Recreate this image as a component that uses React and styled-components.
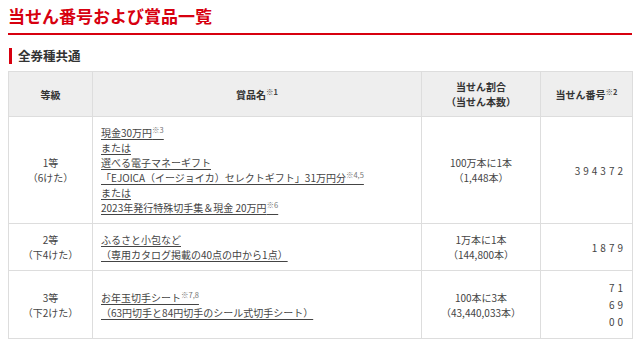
import React from 'react';
import styled, { createGlobalStyle } from 'styled-components';

const GlobalStyle = createGlobalStyle`
  body {
    margin: 0;
    padding: 0 8px;
    background: #fff;
    color: #333;
    font-family: "Noto Sans CJK JP", "Noto Sans", sans-serif;
  }
`;

const Title = styled.h1`
  margin: 0;
  padding: 5px 0 6px;
  font-size: 17px;
  line-height: 22px;
  font-weight: bold;
  color: #d7000f;
  border-bottom: 2px solid #d7000f;
`;

const SubTitle = styled.h2`
  margin: 13px 0 7px 1px;
  padding-left: 6px;
  border-left: 3px solid #d7000f;
  font-size: 12.5px;
  line-height: 16px;
  font-weight: bold;
  color: #333;
`;

const Table = styled.table`
  width: 100%;
  table-layout: fixed;
  border-collapse: collapse;
  font-size: 10px;
  line-height: 15px;
`;

const Th = styled.th`
  background: #eeeeee;
  border: 1px solid #dddddd;
  padding: 7px 8px;
  font-weight: bold;
  color: #333;
  text-align: center;
  vertical-align: middle;
`;

const Td = styled.td`
  border: 1px solid #dddddd;
  padding: 8px 8px;
  color: #444;
  vertical-align: middle;
  text-align: ${(p) => p.$align || 'center'};
`;

const PrizeLink = styled.a`
  color: #444;
  text-decoration: underline;
  text-underline-offset: 2px;
  cursor: pointer;
`;

const Note = styled.sup`
  font-size: 7.5px;
  line-height: 0;
  color: ${(p) => (p.$head ? '#444' : '#777')};
  vertical-align: 4px;
`;

const Numbers = styled.div`
  letter-spacing: 3px;
  line-height: 17px;
`;

const rows = [
  {
    grade: '1等',
    digits: '（6けた）',
    prize: [
      <>現金30万円<Note>※3</Note></>,
      'または',
      '選べる電子マネーギフト',
      <>「EJOICA（イージョイカ）セレクトギフト」31万円分<Note>※4,5</Note></>,
      'または',
      <>2023年発行特殊切手集＆現金 20万円<Note>※6</Note></>,
    ],
    odds: ['100万本に1本', '（1,448本）'],
    numbers: ['394372'],
  },
  {
    grade: '2等',
    digits: '（下4けた）',
    prize: ['ふるさと小包など', '（専用カタログ掲載の40点の中から1点）'],
    odds: ['1万本に1本', '（144,800本）'],
    numbers: ['1879'],
  },
  {
    grade: '3等',
    digits: '（下2けた）',
    prize: [
      <>お年玉切手シート<Note>※7,8</Note></>,
      '（63円切手と84円切手のシール式切手シート）',
    ],
    odds: ['100本に3本', '（43,440,033本）'],
    numbers: ['71', '69', '00'],
  },
];

const Lines = ({ items }) =>
  items.map((item, i) => (
    <React.Fragment key={i}>
      {i > 0 && <br />}
      {item}
    </React.Fragment>
  ));

export default function App() {
  return (
    <>
      <GlobalStyle />
      <Title>当せん番号および賞品一覧</Title>
      <SubTitle>全券種共通</SubTitle>
      <Table>
        <colgroup>
          <col style={{ width: 84 }} />
          <col style={{ width: 329 }} />
          <col style={{ width: 119 }} />
          <col style={{ width: 92 }} />
        </colgroup>
        <thead>
          <tr>
            <Th>等級</Th>
            <Th>
              賞品名<Note $head>※1</Note>
            </Th>
            <Th>
              当せん割合
              <br />
              （当せん本数）
            </Th>
            <Th>
              当せん番号<Note $head>※2</Note>
            </Th>
          </tr>
        </thead>
        <tbody>
          {rows.map((row) => (
            <tr key={row.grade}>
              <Td>
                {row.grade}
                <br />
                {row.digits}
              </Td>
              <Td $align="left">
                <PrizeLink>
                  <Lines items={row.prize} />
                </PrizeLink>
              </Td>
              <Td>
                <Lines items={row.odds} />
              </Td>
              <Td $align="right" style={{ paddingRight: 6 }}>
                {row.numbers.map((n) => (
                  <Numbers key={n}>{n}</Numbers>
                ))}
              </Td>
            </tr>
          ))}
        </tbody>
      </Table>
    </>
  );
}
